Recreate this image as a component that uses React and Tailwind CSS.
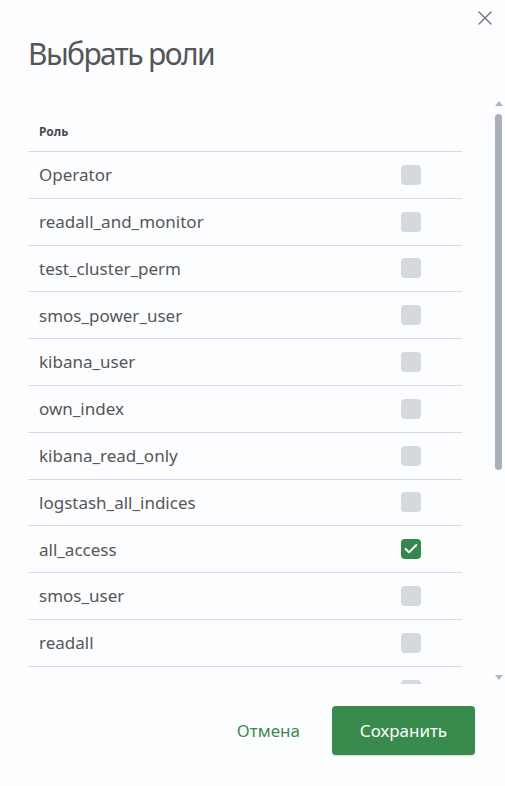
import React from 'react'
import { X, Check } from 'lucide-react'

const roles = [
  { name: 'Operator', checked: false },
  { name: 'readall_and_monitor', checked: false },
  { name: 'test_cluster_perm', checked: false },
  { name: 'smos_power_user', checked: false },
  { name: 'kibana_user', checked: false },
  { name: 'own_index', checked: false },
  { name: 'kibana_read_only', checked: false },
  { name: 'logstash_all_indices', checked: false },
  { name: 'all_access', checked: true },
  { name: 'smos_user', checked: false },
  { name: 'readall', checked: false },
  { name: 'kibana_dashboard_only', checked: false },
]

function RoleCheckbox({ checked }) {
  if (checked) {
    return (
      <div className="w-[20px] h-[20px] rounded-[4px] bg-[#37864b] flex items-center justify-center">
        <Check size={16} strokeWidth={3} className="text-white" />
      </div>
    )
  }
  return <div className="w-[20px] h-[20px] rounded-[4px] bg-[#d5d8dd]" />
}

export default function App() {
  return (
    <div className="w-[505px] h-[786px] bg-[#fcfdfe] relative flex flex-col font-['Noto_Sans',sans-serif] text-[#555759]">
      {/* Close */}
      <button className="absolute top-[6px] right-[8px] text-[#6b6e72]">
        <X size={24} strokeWidth={1.2} />
      </button>

      {/* Title */}
      <h1 className="pt-[34px] pl-[28px] text-[30px] leading-[40px] text-[#545658] tracking-[-1.6px]">
        Выбрать роли
      </h1>

      {/* Scroll area */}
      <div className="mt-[26px] h-[584px] flex">
        <div className="flex-1 overflow-hidden pl-[28px] pr-[30px]">
          <div className="h-[52px] flex items-end pb-[10px] pl-[11px] border-b border-[#d9dce0]">
            <span className="text-[12px] font-bold text-[#4a4c4f]">Роль</span>
          </div>
          {roles.map((role) => (
            <div
              key={role.name}
              className="h-[46.8px] flex items-center justify-between pl-[11px] pr-[41px] border-b border-[#d9dce0]"
            >
              <span className="text-[17px]">{role.name}</span>
              <RoleCheckbox checked={role.checked} />
            </div>
          ))}
        </div>

        {/* Scrollbar */}
        <div className="w-[13px] flex flex-col items-center pt-[1px]">
          <div className="w-0 h-0 border-l-[4px] border-r-[4px] border-b-[5px] border-l-transparent border-r-transparent border-b-[#b1b7be]" />
          <div className="mt-[8px] w-[7px] h-[356px] rounded-full bg-[#a9b0b8]" />
          <div className="flex-1" />
          <div className="mb-[4px] w-0 h-0 border-l-[4px] border-r-[4px] border-t-[5px] border-l-transparent border-r-transparent border-t-[#b1b7be]" />
        </div>
      </div>

      {/* Footer */}
      <div className="flex justify-end items-center gap-[32px] pr-[30px] pt-[22px]">
        <button className="text-[17px] text-[#3a8a50]">Отмена</button>
        <button className="w-[143px] h-[49px] rounded-[4px] bg-[#388a4d] text-white text-[17px] shadow-[0_1px_2px_rgba(0,0,0,0.15)]">
          Сохранить
        </button>
      </div>
    </div>
  )
}
